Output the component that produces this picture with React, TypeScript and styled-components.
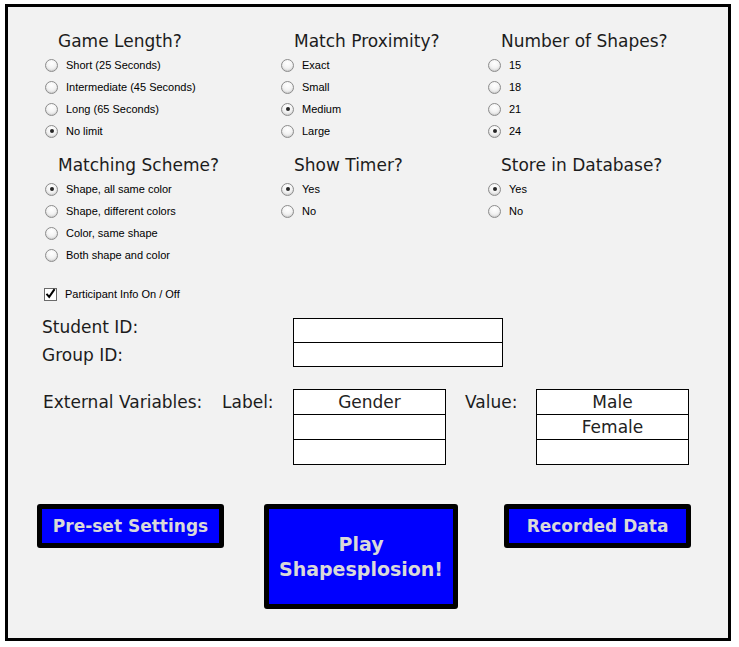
import React from "react";
import styled, { createGlobalStyle } from "styled-components";

const GlobalStyle = createGlobalStyle`
    html, body {
        margin: 0;
        padding: 0;
        background: #ffffff;
    }
    body {
        font-family: "DejaVu Sans", Verdana, sans-serif;
    }
`;

interface OptionGroupProps {
    title: string,
    options: string[],
    selected: number,
    name: string
}

const groups: OptionGroupProps[] = [
    { title: "Game Length?", name: "length", selected: 3, options: ["Short (25 Seconds)", "Intermediate (45 Seconds)", "Long (65 Seconds)", "No limit"] },
    { title: "Match Proximity?", name: "proximity", selected: 2, options: ["Exact", "Small", "Medium", "Large"] },
    { title: "Number of Shapes?", name: "shapes", selected: 3, options: ["15", "18", "21", "24"] },
    { title: "Matching Scheme?", name: "scheme", selected: 0, options: ["Shape, all same color", "Shape, different colors", "Color, same shape", "Both shape and color"] },
    { title: "Show Timer?", name: "timer", selected: 0, options: ["Yes", "No"] },
    { title: "Store in Database?", name: "database", selected: 0, options: ["Yes", "No"] },
];

const OptionGroup = ({ title, options, selected, name }: OptionGroupProps) => (
    <Group>
        <GroupTitle>{title}</GroupTitle>
        {options.map((o, k) => (
            <OptionRow key={k}>
                <Radio type="radio" name={name} defaultChecked={k === selected} />
                <span>{o}</span>
            </OptionRow>
        ))}
    </Group>
);

const App = () => {
    return (
        <>
            <GlobalStyle />
            <Frame>
                <OptionsGrid>
                    {groups.map((g) => (
                        <OptionGroup key={g.name} {...g} />
                    ))}
                </OptionsGrid>

                <CheckRow>
                    <CheckBox>
                        <svg width="11" height="11" viewBox="0 0 11 11">
                            <path d="M1.5 5.8 L4.2 8.8 L9.6 1.2" fill="none" stroke="#000" strokeWidth="2" />
                        </svg>
                    </CheckBox>
                    <span>Participant Info On / Off</span>
                </CheckRow>

                <IdSection>
                    <IdLabels>
                        <div>Student ID:</div>
                        <div>Group ID:</div>
                    </IdLabels>
                    <FieldStack $width={210}>
                        <Field $compact />
                        <Field $compact />
                    </FieldStack>
                </IdSection>

                <ExternalSection>
                    <FormLabel $width={179}>External Variables:</FormLabel>
                    <FormLabel $width={71}>Label:</FormLabel>
                    <FieldStack $width={153}>
                        <Field>Gender</Field>
                        <Field />
                        <Field />
                    </FieldStack>
                    <FormLabel $width={90} $indent={19}>Value:</FormLabel>
                    <FieldStack $width={153}>
                        <Field>Male</Field>
                        <Field>Female</Field>
                        <Field />
                    </FieldStack>
                </ExternalSection>

                <ButtonRow>
                    <BlueButton $width={187} $height={44}>Pre-set Settings</BlueButton>
                    <BlueButton $width={194} $height={105} $big>Play<br />Shapesplosion!</BlueButton>
                    <BlueButton $width={187} $height={44}>Recorded Data</BlueButton>
                </ButtonRow>
            </Frame>
        </>
    );
};

const Frame = styled.div`
    box-sizing: border-box;
    width: 726px;
    height: 637px;
    margin: 4px 0 0 5px;
    border: 3px solid #000;
    background: #f2f2f2;
    display: flex;
    flex-direction: column;
`;

const OptionsGrid = styled.div`
    display: grid;
    grid-template-columns: 236px 207px 1fr;
    row-gap: 12px;
    padding: 23px 0 0 37px;
`;

const Group = styled.div`
    display: flex;
    flex-direction: column;
`;

const GroupTitle = styled.div`
    font-family: "DejaVu Sans", Verdana, sans-serif;
    font-size: 17px;
    line-height: 22px;
    color: #1c1c1c;
    margin: 0 0 2px 13px;
    white-space: nowrap;
`;

const OptionRow = styled.label`
    display: flex;
    align-items: center;
    gap: 8px;
    height: 22px;
    font-family: "Liberation Sans", Arial, sans-serif;
    font-size: 11px;
    color: #000;
    white-space: nowrap;
`;

const Radio = styled.input`
    appearance: none;
    margin: 0;
    width: 13px;
    height: 13px;
    border-radius: 50%;
    border: 1px solid #8c8c8c;
    box-sizing: border-box;
    background: radial-gradient(circle at 50% 30%, #ffffff 0%, #f4f4f4 45%, #d6d6d6 100%);
    box-shadow: inset 0 -1px 1px rgba(0, 0, 0, 0.08);
    display: grid;
    place-items: center;
    flex: none;
    &:checked::after {
        content: "";
        width: 4px;
        height: 4px;
        border-radius: 50%;
        background: #262626;
    }
`;

const CheckRow = styled.label`
    display: flex;
    align-items: center;
    gap: 8px;
    height: 22px;
    margin: 17px 0 0 36px;
    font-family: "Liberation Sans", Arial, sans-serif;
    font-size: 11px;
    color: #000;
`;

const CheckBox = styled.span`
    box-sizing: border-box;
    width: 13px;
    height: 13px;
    border: 1px solid #6a6a6a;
    background: #fff;
    display: grid;
    place-items: center;
    svg {
        display: block;
        margin-top: -2px;
    }
`;

const IdSection = styled.div`
    display: flex;
    align-items: flex-start;
    margin: 8px 0 0 34px;
`;

const IdLabels = styled.div`
    width: 251px;
    font-size: 17px;
    line-height: 28px;
    color: #1c1c1c;
    & + div {
        margin-top: 5px;
    }
`;

const FieldStack = styled.div<{ $width: number }>`
    width: ${(p) => p.$width}px;
    flex: none;
    box-sizing: border-box;
    border: 1px solid #000;
    background: #fff;
`;

const Field = styled.div<{ $compact?: boolean }>`
    height: ${(p) => (p.$compact ? 23 : 24)}px;
    line-height: ${(p) => (p.$compact ? 23 : 24)}px;
    text-align: center;
    font-size: 17px;
    color: #222;
    & + & {
        border-top: 1px solid #000;
    }
`;

const ExternalSection = styled.div`
    display: flex;
    align-items: flex-start;
    margin: 20px 0 0 35px;
`;

const FormLabel = styled.div<{ $width: number, $indent?: number }>`
    width: ${(p) => p.$width}px;
    box-sizing: border-box;
    padding-left: ${(p) => p.$indent || 0}px;
    flex: none;
    font-size: 17px;
    line-height: 26px;
    color: #1c1c1c;
    white-space: nowrap;
`;

const ButtonRow = styled.div`
    display: grid;
    grid-template-columns: 227px 240px 187px;
    align-items: start;
    margin: 39px 0 0 29px;
`;

const BlueButton = styled.button<{ $width: number, $height: number, $big?: boolean }>`
    box-sizing: border-box;
    width: ${(p) => p.$width}px;
    height: ${(p) => p.$height}px;
    padding: 0;
    border: 5px solid #000;
    border-radius: 3px;
    background: #0000ff;
    color: #d9d9d9;
    font-family: "DejaVu Sans", Verdana, sans-serif;
    font-weight: bold;
    font-size: ${(p) => (p.$big ? 19 : 17)}px;
    line-height: ${(p) => (p.$big ? 25 : 20)}px;
    text-align: center;
    white-space: nowrap;
`;

export default App;
